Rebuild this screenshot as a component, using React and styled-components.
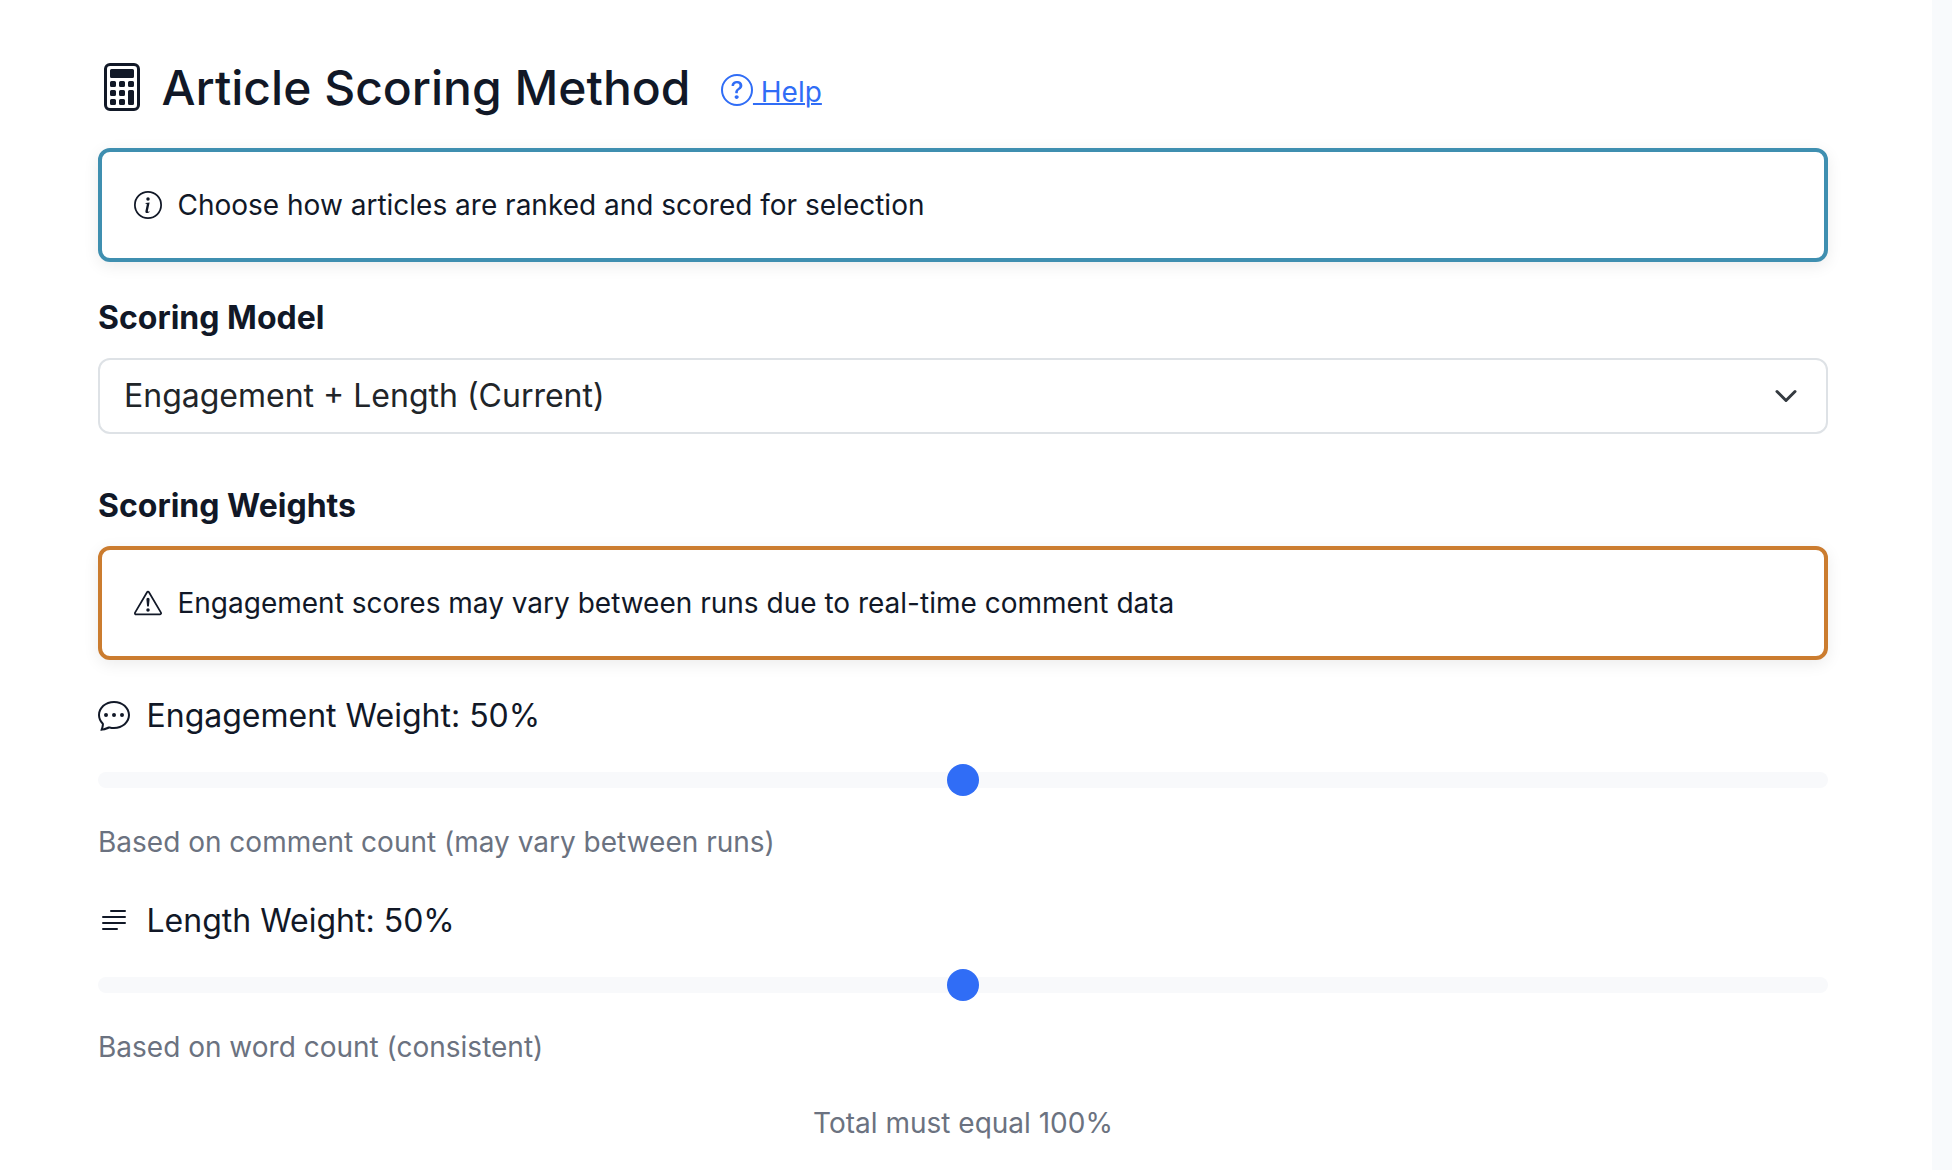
import React, { useState } from "react";
import styled, { createGlobalStyle } from "styled-components";
import {
  BsCalculator,
  BsChatDots,
  BsExclamationTriangle,
  BsInfoCircle,
  BsQuestionCircle,
  BsTextParagraph,
} from "react-icons/bs";

export default function App() {
  const [engagement, setEngagement] = useState(50);
  const length = 100 - engagement;

  return (
    <>
      <GlobalStyle />
      <Panel>
        <Header>
          <BsCalculator />
          <h2>Article Scoring Method</h2>
          <HelpLink href="#help">
            <BsQuestionCircle /> Help
          </HelpLink>
        </Header>
        <Notice $color="#3f8fb0">
          <BsInfoCircle />
          <span>Choose how articles are ranked and scored for selection</span>
        </Notice>

        <SectionLabel>Scoring Model</SectionLabel>
        <SelectBox type="button">
          <span>Engagement + Length (Current)</span>
          <svg viewBox="0 0 16 16" fill="none">
            <path
              d="m2 5 6 6 6-6"
              stroke="#343a40"
              strokeWidth="2"
              strokeLinecap="round"
              strokeLinejoin="round"
            />
          </svg>
        </SelectBox>

        <SectionLabel>Scoring Weights</SectionLabel>
        <Notice $color="#cb7c2f">
          <BsExclamationTriangle />
          <span>
            Engagement scores may vary between runs due to real-time comment data
          </span>
        </Notice>

        <WeightField>
          <label htmlFor="engagement">
            <BsChatDots />
            <span>Engagement Weight: {engagement}%</span>
          </label>
          <Slider
            id="engagement"
            value={engagement}
            onChange={(e) => setEngagement(Number(e.target.value))}
          />
          <Hint>Based on comment count (may vary between runs)</Hint>
        </WeightField>
        <WeightField>
          <label htmlFor="length">
            <BsTextParagraph />
            <span>Length Weight: {length}%</span>
          </label>
          <Slider
            id="length"
            value={length}
            onChange={(e) => setEngagement(100 - Number(e.target.value))}
          />
          <Hint>Based on word count (consistent)</Hint>
        </WeightField>
        <Hint $center>Total must equal 100%</Hint>
      </Panel>
    </>
  );
}

const GlobalStyle = createGlobalStyle`
  * {
    box-sizing: border-box;
  }
  body {
    margin: 0;
    background-color: #f8fafc;
    color: #111827;
    font-family: Inter, "Liberation Sans", sans-serif;
    font-size: 32px;
    line-height: 48px;
  }
`;

const Panel = styled.main`
  width: 1932px;
  height: 1170px;
  padding: 58px 104px 0 98px;
  background-color: #ffffff;
  overflow: hidden;
`;

const Header = styled.header`
  display: flex;
  align-items: center;
  height: 58px;
  margin-bottom: 32px;
  > svg {
    width: 48px;
    height: 48px;
    margin-right: 15.5px;
  }
  h2 {
    margin: 2px 0 0;
    font-size: 48px;
    font-weight: 500;
    line-height: 58px;
  }
`;

const HelpLink = styled.a`
  margin: 9px 0 0 30.5px;
  color: #306df6;
  font-size: 28px;
  line-height: 42px;
  text-decoration: underline;
  text-decoration-thickness: 2px;
  svg {
    width: 32px;
    height: 32px;
    vertical-align: -4px;
  }
`;

const Notice = styled.div`
  display: flex;
  align-items: center;
  gap: 15.5px;
  height: 114px;
  margin-bottom: 32px;
  padding: 0 32px;
  border: 4px solid ${(props) => props.$color};
  border-radius: 12px;
  background-color: #ffffff;
  box-shadow: 0 4px 16px rgba(0, 0, 0, 0.08);
  font-size: 28px;
`;

const SectionLabel = styled.div`
  margin-bottom: 16px;
  font-weight: 700;
`;

const SelectBox = styled.button`
  display: flex;
  align-items: center;
  justify-content: space-between;
  width: 100%;
  height: 76px;
  margin-bottom: 48px;
  padding: 0 28px 0 24px;
  border: 2px solid #dee2e6;
  border-radius: 12px;
  background-color: #ffffff;
  color: #212529;
  font: inherit;
  svg {
    width: 24px;
    height: 24px;
  }
`;

const WeightField = styled.div`
  margin-bottom: 34px;
  label {
    display: flex;
    align-items: center;
    gap: 16.5px;
    margin-bottom: 16px;
  }
  svg {
    margin-bottom: 2px;
  }
`;

const Slider = styled.input.attrs({ type: "range", min: 0, max: 100 })`
  display: block;
  width: 100%;
  height: 48px;
  margin: 0 0 17px;
  background: transparent;
  appearance: none;
  &::-webkit-slider-runnable-track {
    height: 16px;
    border-radius: 8px;
    background-color: #f8f9fb;
  }
  &::-webkit-slider-thumb {
    width: 32px;
    height: 32px;
    margin-top: -8px;
    border: 0;
    border-radius: 50%;
    background-color: #306df6;
    appearance: none;
  }
`;

const Hint = styled.div`
  color: #6b7280;
  font-size: 28px;
  line-height: 42px;
  text-align: ${(props) => (props.$center ? "center" : "left")};
`;
